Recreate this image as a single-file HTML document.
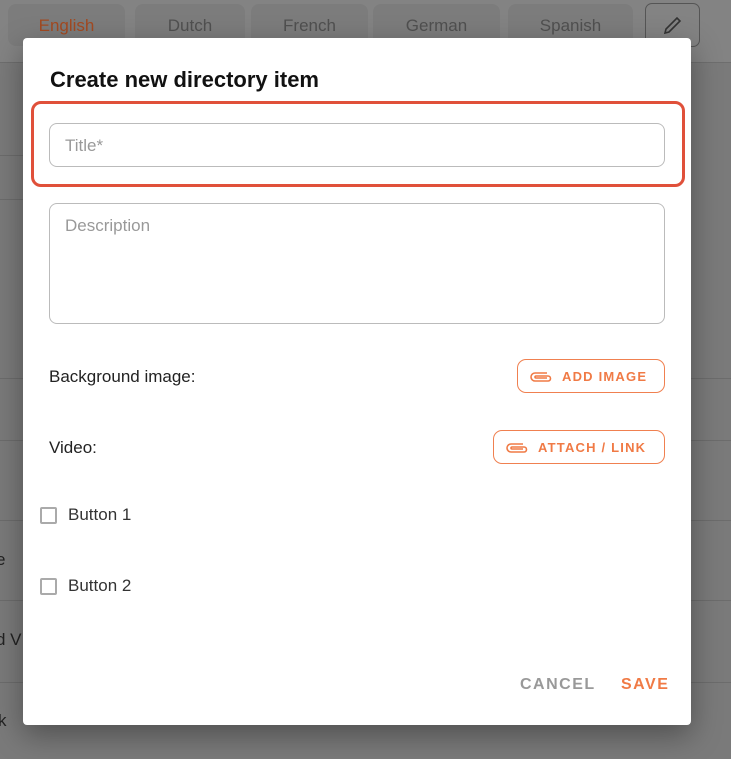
<!DOCTYPE html>
<html><head><style>
body{margin:0;width:731px;height:759px;overflow:hidden;background:#7a7a7a;font-family:"Liberation Sans",sans-serif;position:relative}
.top{position:absolute;left:0;top:0;width:731px;height:62px;background:#838383;border-bottom:1px solid #6e6e6e}
.tab{position:absolute;top:4px;height:42px;background:#7c7c7c;border-radius:8px;color:#505050;font-size:17px;line-height:44px;text-align:center}
.hl{position:absolute;left:0;height:1px;background:#6c6c6c;width:731px}
.side{position:absolute;left:0;color:#222;font-size:17px}
.dlg{position:absolute;left:23px;top:38px;width:668px;height:687px;background:#fff;border-radius:4px;box-shadow:0 10px 30px rgba(0,0,0,.35)}
h1{position:absolute;left:27px;top:29px;margin:0;font-size:22px;font-weight:bold;color:#111}
.red{position:absolute;left:8px;top:63px;width:648px;height:80px;border:3px solid #e0503a;border-radius:10px}
.inp{position:absolute;left:26px;width:616px;border:1px solid #bbb;border-radius:8px;color:#999;font-size:17px;padding-left:15px;box-sizing:border-box}
.lbl{position:absolute;left:26px;font-size:17px;color:#222}
.btn{position:absolute;height:34px;border:1px solid #f08050;border-radius:9px;color:#f07a45;font-size:13px;font-weight:bold;letter-spacing:1.2px;line-height:34px;box-sizing:border-box;padding-left:44px}
.btn svg{position:absolute;left:11px;top:10px}
.cb{position:absolute;left:17px;width:17px;height:17px;border:2px solid #aaa;border-radius:2px;box-sizing:border-box}
.cbl{position:absolute;left:45px;font-size:17px;color:#333}
.act{position:absolute;top:638px;font-size:16px;font-weight:bold;letter-spacing:1.5px}
</style></head><body>
<div class="top"></div>
<div class="tab" style="left:8px;width:117px;color:#a24a22;">English</div>
<div class="tab" style="left:135px;width:110px">Dutch</div>
<div class="tab" style="left:251px;width:117px">French</div>
<div class="tab" style="left:373px;width:127px">German</div>
<div class="tab" style="left:508px;width:125px">Spanish</div>
<div style="position:absolute;left:645px;top:3px;width:55px;height:44px;border:1px solid #555;border-radius:7px;box-sizing:border-box"><svg width="24" height="24" viewBox="0 0 24 24" style="position:absolute;left:15px;top:9px"><path d="M4 20l1-4L16 5l3 3L8 19z" fill="none" stroke="#333" stroke-width="1.6"/></svg></div>
<div class="hl" style="top:155px;width:30px"></div>
<div class="hl" style="top:199px;width:30px"></div>
<div class="hl" style="top:378px"></div>
<div class="hl" style="top:440px"></div>
<div class="hl" style="top:520px"></div>
<div class="hl" style="top:600px"></div>
<div class="hl" style="top:682px"></div>
<div class="side" style="top:550px;left:-4px">e</div>
<div class="side" style="top:630px;left:-4px">d V</div>
<div class="side" style="top:711px;left:-2px">k</div>
<div class="dlg">
<h1>Create new directory item</h1>
<div class="red"></div>
<div class="inp" style="top:85px;height:44px;line-height:44px">Title*</div>
<div class="inp" style="top:165px;height:121px;padding-top:12px">Description</div>
<div class="lbl" style="top:329px">Background image:</div>
<div class="btn" style="left:494px;top:321px;width:148px"><svg width="24" height="14" viewBox="0 0 24 14"><path d="M18 3H6a4 4 0 000 8h13a2.5 2.5 0 000-5H7a1 1 0 000 2h11" fill="none" stroke="#f07a45" stroke-width="1.6"/></svg>ADD IMAGE</div>
<div class="lbl" style="top:400px">Video:</div>
<div class="btn" style="left:470px;top:392px;width:172px"><svg width="24" height="14" viewBox="0 0 24 14"><path d="M18 3H6a4 4 0 000 8h13a2.5 2.5 0 000-5H7a1 1 0 000 2h11" fill="none" stroke="#f07a45" stroke-width="1.6"/></svg>ATTACH / LINK</div>
<div class="cb" style="top:469px"></div><div class="cbl" style="top:467px">Button 1</div>
<div class="cb" style="top:540px"></div><div class="cbl" style="top:538px">Button 2</div>
<div class="act" style="left:497px;color:#999">CANCEL</div>
<div class="act" style="left:598px;color:#f07a45">SAVE</div>
</div>
</body></html>
